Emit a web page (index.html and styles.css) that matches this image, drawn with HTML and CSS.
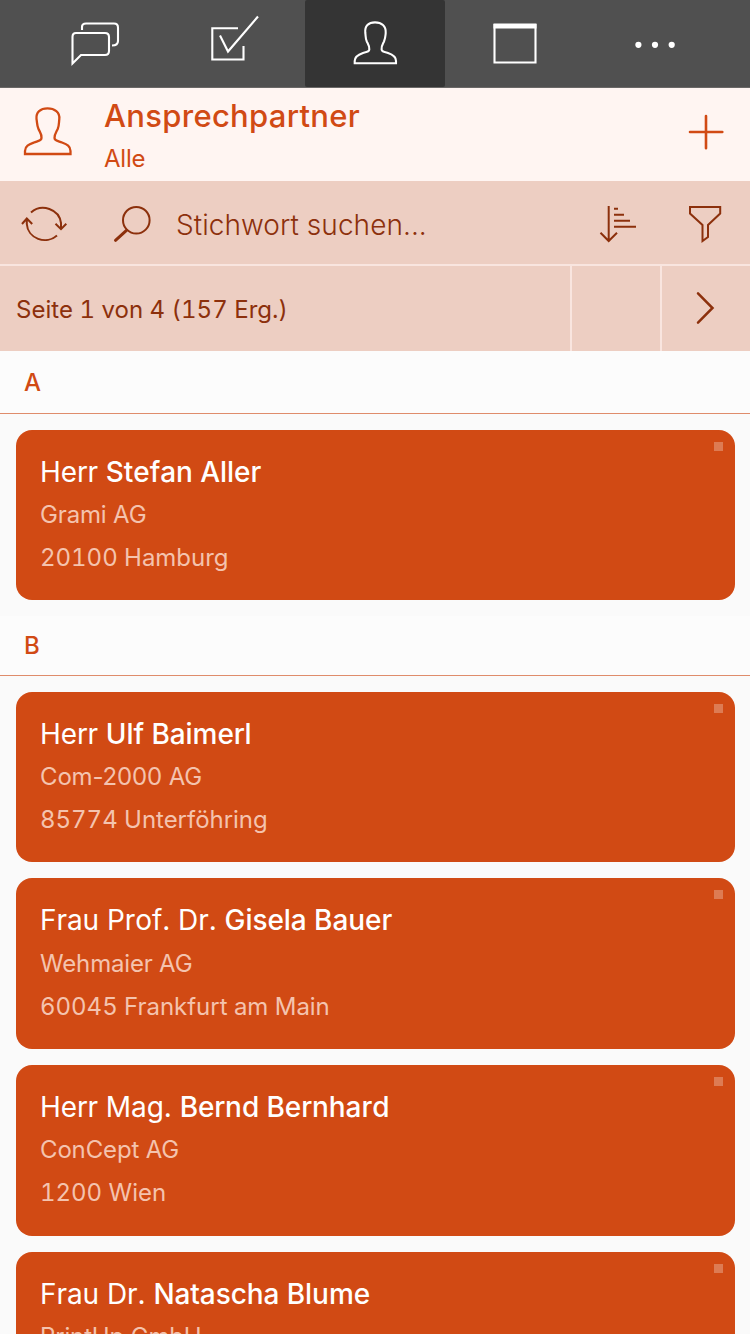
FILE: index.html
```
<!DOCTYPE html>
<html lang="de">
<head>
<meta charset="utf-8">
<title>Ansprechpartner</title>
<link rel="stylesheet" href="styles.css">
</head>
<body>
<nav class="tabs">
  <a class="tab"><svg width="140" height="87" viewBox="25 0 140 87"><path d="M76 33H105Q109 33 109 37V51Q109 55 105 55H81L72.500 63.500V37Q72.500 33 76 33ZM82 30V27Q82 23.500 86 23.500H114Q118 23.500 118 27.500V41Q118 45.500 112 45.500"/></svg></a>
  <a class="tab"><svg width="140" height="87" viewBox="165 0 140 87"><path d="M238 28.300H212.300V59.500H243.500V46M220 35.500L228 51.500L258 16.500"/></svg></a>
  <a class="tab active"><svg width="140" height="87" viewBox="305 0 140 87"><path d="M354.700 63.300V61C354.700 56.500 358.500 54.500 363 53C367.500 51.700 369.300 51.500 369.300 49.500C369.500 45.500 368 44 366.800 41.500C365.300 38 365.800 36 365.300 33C364.500 26 368.500 22.400 375 22.400C381.500 22.400 386.200 26 385.700 33C385.400 36 385.500 38 384 41.500C382.500 44.500 381.200 46 381.600 49.500C381.700 51.500 383.500 51.700 388 53C392.500 54.500 396 56.500 396 61V63.300Z"/></svg></a>
  <a class="tab"><svg width="140" height="87" viewBox="445 0 140 87"><path d="M494.500 25H535.500V62.500H494.500Z"/><path d="M493.500 26H536.500" stroke-width="5"/></svg></a>
  <a class="tab"><svg width="140" height="87" viewBox="585 0 140 87"><g fill="#fff" stroke="none"><circle cx="638.400" cy="44.800" r="3.100"/><circle cx="655" cy="44.800" r="3.100"/><circle cx="671.700" cy="44.800" r="3.100"/></g></svg></a>
</nav>
<header class="page-head">
  <svg class="ico orange" width="105" height="93" viewBox="0 88 105 93"><path d="M25 154V151C25 146 29 144.500 34 142.500C39 140.700 41.500 140.500 41.500 138C41.700 133.500 40 132.500 38.500 129C36.700 125 37.300 123 36.500 119C35.800 112 40.500 108.400 47.500 108.400C54.500 108.400 60 112 59.300 119C58.800 123 59.300 125 57.700 129C56 132.500 54.500 134 54.500 138C54.500 140.500 57 140.700 62 142.500C67 144.500 70.500 146 70.500 151V154Z"/></svg>
  <div class="titles"><h1>Ansprechpartner</h1><p>Alle</p></div>
  <svg class="ico orange" width="90" height="93" viewBox="660 88 90 93"><path d="M706 116V148.300M690 132H722.300" stroke-width="2.600" stroke-linecap="round"/></svg>
</header>
<div class="search">
  <svg class="ico" width="88" height="84" viewBox="0 181 88 84"><path d="M31 212.500A18 17.200 0 0 1 61 223V229M55.500 223.800L61 229.200L66.300 223.800M57 235.500A18 17.200 0 0 1 26.800 224V218.500M22 224L26.800 218.500L32.200 224"/></svg>
  <svg class="ico" width="88" height="84" viewBox="88 181 88 84"><circle cx="136.300" cy="220.200" r="13.300"/><path d="M126.500 230.300L115.500 240.300" stroke-width="3" stroke-linecap="round"/></svg>
  <span class="placeholder">Stichwort suchen...</span>
  <svg class="ico" width="90" height="84" viewBox="570 181 90 84"><path d="M608.700 206V241M600.500 232.700L608.700 241L617 232.700M614 208.700H618M614 214.700H624M614 220.700H630M614 226.700H636"/></svg>
  <svg class="ico" width="90" height="84" viewBox="660 181 90 84"><path d="M690 207H720.200V213.500L708 225V237L702.500 241V225L690 213.500Z"/></svg>
</div>
<div class="pager">
  <span class="count">Seite 1 von 4 (157 Erg.)</span>
  <span class="cell"></span>
  <span class="cell"><svg class="ico" width="88" height="85" viewBox="662 266 88 85"><path d="M698 293.300L712.500 308L698 322.700" stroke-width="2.500" stroke-linecap="round"/></svg></span>
</div>
<main>
  <h2 class="letter first">A</h2>
  <section class="group">
    <article class="card"><h3>Herr <b>Stefan Aller</b></h3><p class="company">Grami AG</p><p>20100 Hamburg</p></article>
  </section>
  <h2 class="letter">B</h2>
  <section class="group">
    <article class="card"><h3>Herr <b>Ulf Baimerl</b></h3><p class="company">Com-2000 AG</p><p>85774 Unterföhring</p></article>
    <article class="card"><h3>Frau Prof. Dr. <b>Gisela Bauer</b></h3><p class="company">Wehmaier AG</p><p>60045 Frankfurt am Main</p></article>
    <article class="card"><h3>Herr Mag. <b>Bernd Bernhard</b></h3><p class="company">ConCept AG</p><p>1200 Wien</p></article>
    <article class="card last"><h3>Frau Dr. <b>Natascha Blume</b></h3><p class="company">PrintUp GmbH</p></article>
  </section>
</main>
</body>
</html>
```
FILE: styles.css
```
* { box-sizing: border-box; margin: 0; padding: 0; }
body { width: 750px; height: 1334px; overflow: hidden; background: #fafafa; font-family: Inter, sans-serif; color: #8c300c; display: flex; flex-direction: column; }
svg { display: block; fill: none; flex: none; }
.tabs, .page-head, .search, .pager { display: flex; flex: none; }
.tabs { height: 88px; padding-left: 25px; background: #505050; border-bottom: 1px solid #6a6867; }
.tab { width: 140px; height: 87px; border-radius: 2px; stroke: #fff; stroke-width: 2.1; }
.tab.active { background: #343434; }
.page-head { height: 93px; background: #fff5f2; color: #d14a14; }
.ico { stroke: #8c300c; stroke-width: 2; }
.orange { stroke: #d14a14; stroke-width: 2.300; }
.titles { flex: 1; padding-top: 8px; margin-left: -1px; margin-right: 1px; }
h1 { font-size: 31px; font-weight: 500; line-height: 40px; letter-spacing: 0.3px; }
.titles p { font-size: 24px; line-height: 32px; margin-top: 7px; letter-spacing: -0.2px; }
.search { height: 85px; background: #edcec2; border-bottom: 2px solid #f9e5df; }
.placeholder { flex: 1; font-size: 28px; font-weight: 300; line-height: 88px; letter-spacing: 0.05px; }
.pager { height: 85px; background: #edcec2; }
.count { flex: 1; padding-left: 16px; font-size: 24px; line-height: 87px; letter-spacing: 0.02px; font-variant-numeric: tabular-nums; }
.cell { width: 90px; border-left: 2px solid #f9e5df; }
main { flex: 1; min-height: 0; overflow: hidden; }
.letter { height: 60px; padding-left: 24px; background: #fcfcfc; border-bottom: 1px solid #df8c6b; color: #d14a14; font-size: 24px; font-weight: 500; line-height: 59px; }
.letter.first { height: 63px; line-height: 63px; }
.group { display: flex; flex-direction: column; gap: 16px; padding: 15.700px 15.500px; }
.card { position: relative; height: 170.700px; padding: 22px 25px; border-radius: 16px; background: #d14a14; color: #f4c3ae; }
.card.last { height: 110px; border-radius: 16px 16px 0 0; }
.card::after { content: ""; position: absolute; top: 12px; right: 12px; width: 9px; height: 9px; background: #dd7b53; }
.card h3 { margin-left: -0.500px; color: #fff; font-size: 28px; font-weight: 400; line-height: 40px; letter-spacing: -0.06px; font-kerning: none; }
.card b { font-weight: 500; }
.card p { margin-left: -0.500px; font-size: 24px; line-height: 43px; letter-spacing: -0.03px; font-variant-numeric: tabular-nums; }
.card .company { margin-top: 1.200px; letter-spacing: -0.15px; }
.card:not(:nth-child(2)) .company { font-variant-numeric: normal; }
```
